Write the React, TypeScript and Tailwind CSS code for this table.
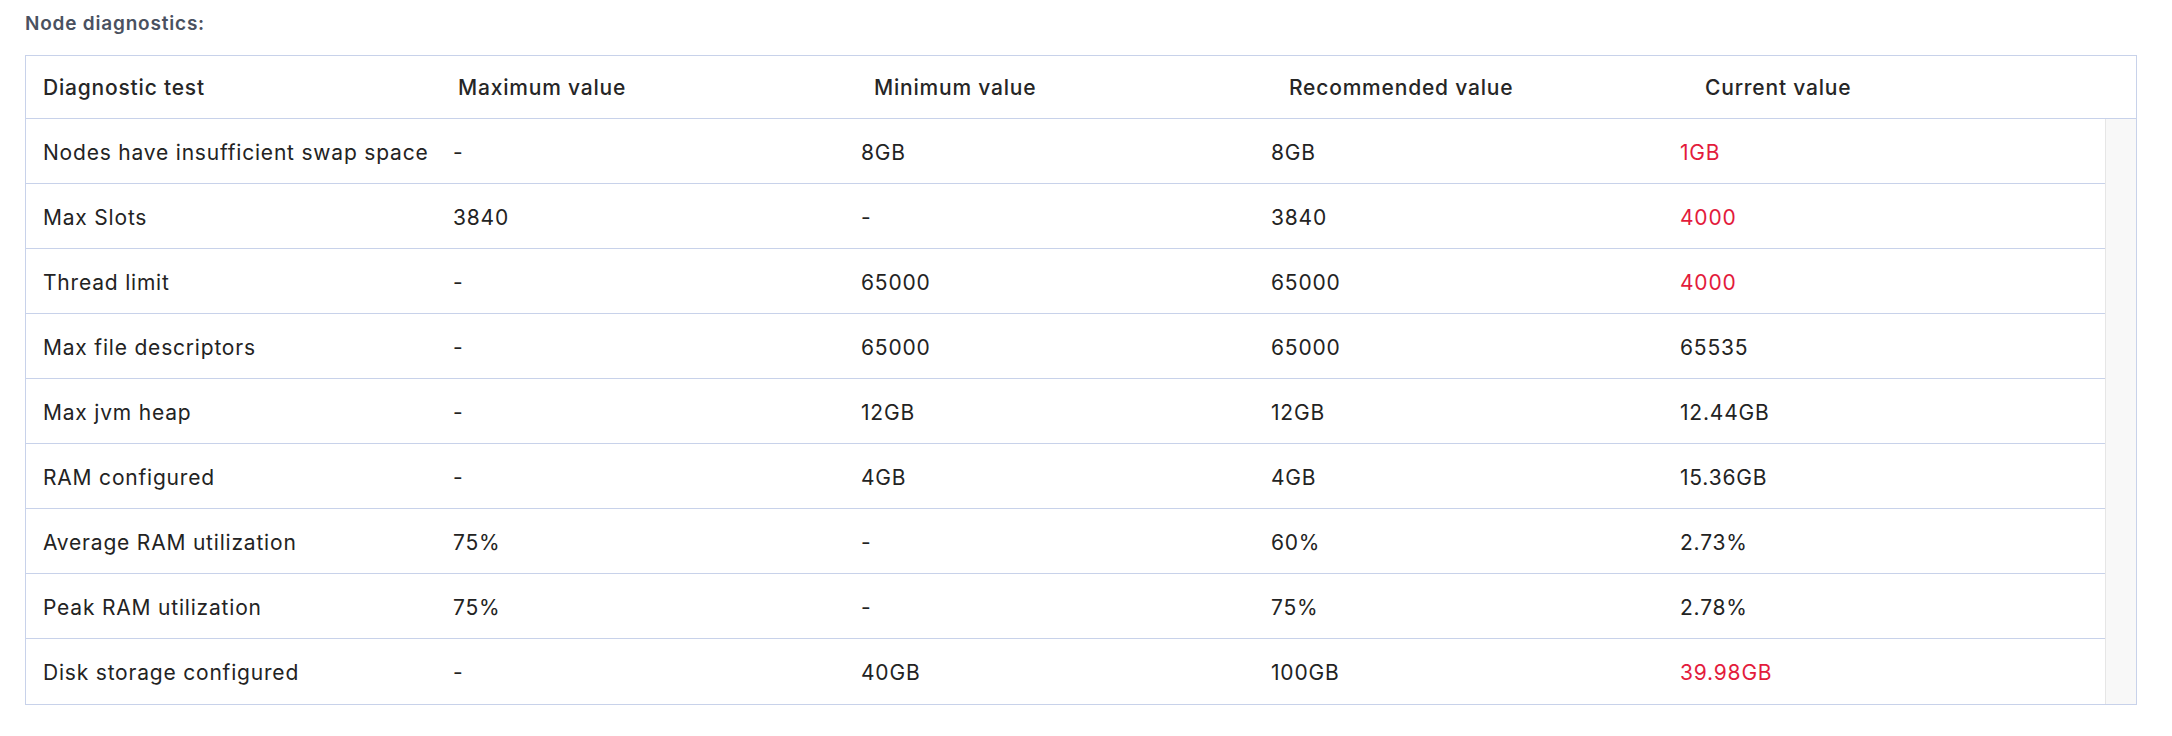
import React from "react";

type Row = { name: string; max: string; min: string; rec: string; cur: string; bad?: boolean };

const rows: Row[] = [
  { name: "Nodes have insufficient swap space", max: "-", min: "8GB", rec: "8GB", cur: "1GB", bad: true },
  { name: "Max Slots", max: "3840", min: "-", rec: "3840", cur: "4000", bad: true },
  { name: "Thread limit", max: "-", min: "65000", rec: "65000", cur: "4000", bad: true },
  { name: "Max file descriptors", max: "-", min: "65000", rec: "65000", cur: "65535" },
  { name: "Max jvm heap", max: "-", min: "12GB", rec: "12GB", cur: "12.44GB" },
  { name: "RAM configured", max: "-", min: "4GB", rec: "4GB", cur: "15.36GB" },
  { name: "Average RAM utilization", max: "75%", min: "-", rec: "60%", cur: "2.73%" },
  { name: "Peak RAM utilization", max: "75%", min: "-", rec: "75%", cur: "2.78%" },
  { name: "Disk storage configured", max: "-", min: "40GB", rec: "100GB", cur: "39.98GB", bad: true },
];

export default function App() {
  return (
    <div className="w-[2172px] h-[736px] bg-white font-['Inter',sans-serif] text-[#232323] tracking-[0.8px]">
      <div className="pl-[25px] pt-[10px] h-[55px] text-[19px] font-semibold text-[#4a5160]">
        Node diagnostics:
      </div>
      <div className="ml-[25px] w-[2112px] border border-[#c8d2ea]">
        <div className="flex h-[63px] items-center pt-[2px] border-b border-[#c8d2ea] text-[21px] font-medium text-[#262626]">
          <div className="w-[415px] pl-[17px]">Diagnostic test</div>
          <div className="w-[416px] pl-[17px]">Maximum value</div>
          <div className="w-[415px] pl-[17px]">Minimum value</div>
          <div className="w-[416px] pl-[17px]">Recommended value</div>
          <div className="w-[415px] pl-[17px]">Current value</div>
        </div>
        <div className="flex">
          <div className="w-[2079px]">
            {rows.map((r, i) => (
              <div
                key={i}
                className={`flex h-[65px] items-center pt-[3px] text-[21px] ${i < rows.length - 1 ? "border-b border-[#c8d2ea]" : ""}`}
              >
                <div className="w-[410px] pl-[17px]">{r.name}</div>
                <div className="w-[408px] pl-[17px]">{r.max}</div>
                <div className="w-[410px] pl-[17px]">{r.min}</div>
                <div className="w-[409px] pl-[17px]">{r.rec}</div>
                <div className={`flex-1 pl-[17px] ${r.bad ? "text-[#e31b3c]" : ""}`}>{r.cur}</div>
              </div>
            ))}
          </div>
          <div className="flex-1 bg-[#f8f8f8] border-l border-[#e6e6e6]" />
        </div>
      </div>
    </div>
  );
}
